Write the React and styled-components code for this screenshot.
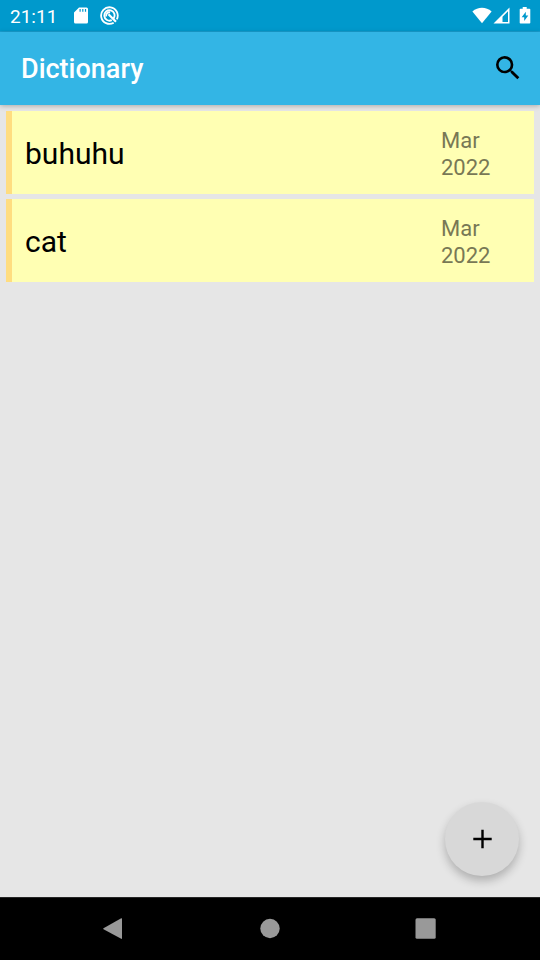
import React from "react";
import styled, { createGlobalStyle } from "styled-components";

const GlobalStyle = createGlobalStyle`
  *, *::before, *::after { box-sizing: border-box; }
  body {
    margin: 0;
    background: #e6e6e6;
    font-family: Roboto, "Noto Sans", sans-serif;
  }
  button {
    border: 0;
    padding: 0;
    background: none;
    color: inherit;
    font: inherit;
    cursor: pointer;
  }
`;

const Screen = styled.div`
  display: flex;
  flex-direction: column;
  min-height: 100vh;
  background: #e6e6e6;
`;

const StatusBar = styled.div`
  display: flex;
  align-items: center;
  justify-content: space-between;
  height: 32px;
  padding: 0 9px 0 10px;
  background: #0099cc;
  border-bottom: 1px solid #189fd1;
  color: #fff;
`;

const StatusGroup = styled.div`
  display: flex;
  align-items: center;
`;

const Clock = styled.time`
  margin-right: 17px;
  padding-top: 1px;
  font-size: 19px;
  line-height: 31px;
`;

const Glyph = styled.svg`
  display: block;
  flex: none;
  width: ${(p) => p.$w}px;
  height: ${(p) => p.$h}px;
  margin-right: ${(p) => p.$gap || 0}px;
  fill: currentColor;
`;

const AppBar = styled.header`
  display: flex;
  align-items: center;
  justify-content: space-between;
  height: 73px;
  padding: 0 16px 2px 21px;
  background: #33b5e5;
  color: #fff;
  box-shadow: 0 1px 5px rgba(0, 0, 0, 0.26);
`;

const Title = styled.h1`
  margin: 0;
  padding-top: 2px;
  font-size: 27px;
  font-weight: 500;
  line-height: 32px;
`;

const IconButton = styled.button`
  display: grid;
  place-items: center;
  color: #000;
`;

const Content = styled.main`
  flex: 1;
`;

const WordList = styled.ul`
  display: flex;
  flex-direction: column;
  gap: 5px;
  margin: 0;
  padding: 6px;
  list-style: none;
`;

const WordCard = styled.li`
  display: flex;
  align-items: center;
  justify-content: space-between;
  height: 83px;
  padding: 0 37px 0 13px;
  border-left: 6px solid #ffdd80;
  background: #ffffb3;
`;

const Word = styled.span`
  padding-top: 2px;
  font-size: 30px;
  line-height: 36px;
  color: #000;
`;

const WordDate = styled.time`
  width: 56px;
  padding-top: 3px;
  font-size: 22px;
  line-height: 27px;
  color: #787855;
`;

const BottomArea = styled.div`
  position: sticky;
  bottom: 0;
`;

const AddButton = styled.button`
  display: grid;
  place-items: center;
  width: 74px;
  height: 74px;
  margin: 0 21px 21px auto;
  border-radius: 50%;
  && {
    background: #d8d8d8;
  }
  color: #000;
  box-shadow: 0 5px 10px rgba(0, 0, 0, 0.24);
`;

const NavBar = styled.nav`
  display: flex;
  justify-content: center;
  height: 63px;
  background: #000;
  border-top: 1px solid #262626;
  color: #999;
`;

const NavButton = styled.button`
  display: grid;
  place-items: center;
  flex: 0 1 156px;
`;

const entries = [
  { word: "buhuhu", date: "Mar 2022" },
  { word: "cat", date: "Mar 2022" },
];

export default function App() {
  return (
    <Screen>
      <GlobalStyle />
      <StatusBar>
        <StatusGroup>
          <Clock>21:11</Clock>
          <Glyph $w={14} $h={17} $gap={12} viewBox="0 0 14 17" aria-hidden="true">
            <path
              fillRule="evenodd"
              d="M5 .5h7.500A1.500 1.500 0 0 1 14 2v13a1.500 1.500 0 0 1-1.500 1.500h-11A1.500 1.500 0 0 1 0 15V5.500zM5.500 2v2.800h1.200V2zM8.200 2v2.800h1.200V2zM10.900 2v2.800h1.200V2z"
            />
          </Glyph>
          <Glyph $w={19} $h={19} viewBox="0 0 19 19" aria-hidden="true">
            <g fill="none" stroke="currentColor">
              <path d="M13.700 16.700A8.300 8.300 0 1 1 16.800 13.400" strokeWidth="1.800" />
              <path d="M13.600 12.600A5.200 5.200 0 1 0 11.800 14.100" strokeWidth="1.900" />
              <path d="M8.500 8.300L16 15.800" strokeWidth="2.200" />
              <path d="M6.300 10.500A3.200 3.200 0 0 1 10.200 6.400" strokeWidth="1.800" />
            </g>
          </Glyph>
        </StatusGroup>
        <StatusGroup>
          <Glyph $w={20} $h={17} $gap={1} viewBox="0 0 20 17" aria-hidden="true">
            <path d="M.4 4.400C5.900-.4 14.100-.4 19.600 4.400L10 16.300z" />
          </Glyph>
          <Glyph $w={17} $h={17} $gap={9} viewBox="0 0 17 17" aria-hidden="true">
            <path fillRule="evenodd" d="M16.500.5v16H.5zM15 4.200L9.500 9.700V15H15z" />
          </Glyph>
          <Glyph $w={12} $h={17} viewBox="0 0 12 17" aria-hidden="true">
            <path
              fillRule="evenodd"
              d="M3.700 0h4v1.800H10.500a.8.8 0 0 1 .8.8v13.100a.8.8 0 0 1-.8.8H1.500a.8.8 0 0 1-.8-.8V2.600a.8.8 0 0 1 .8-.8H3.700zM6.800 4.700L2.700 10.300H5.200V14L9.300 8.500H6.800z"
            />
          </Glyph>
        </StatusGroup>
      </StatusBar>
      <AppBar>
        <Title>Dictionary</Title>
        <IconButton type="button" aria-label="Search">
          <Glyph $w={32} $h={32} viewBox="0 0 24 24" aria-hidden="true">
            <path d="M15.500 14h-.79l-.28-.27A6.471 6.471 0 0 0 16 9.500 6.500 6.500 0 1 0 9.500 16c1.610 0 3.090-.59 4.230-1.570l.27.280v.790l5 4.990L20.490 19l-4.990-5zm-6 0C7.010 14 5 11.990 5 9.500S7.010 5 9.500 5 14 7.010 14 9.500 11.990 14 9.500 14z" />
          </Glyph>
        </IconButton>
      </AppBar>
      <Content>
        <WordList>
          {entries.map((entry) => (
            <WordCard key={entry.word}>
              <Word>{entry.word}</Word>
              <WordDate dateTime="2022-03">{entry.date}</WordDate>
            </WordCard>
          ))}
        </WordList>
      </Content>
      <BottomArea>
        <AddButton type="button" aria-label="Add word">
          <Glyph $w={32} $h={32} viewBox="0 0 32 32" aria-hidden="true">
            <path d="M15.300 6.800h2.400v8h8v2.400h-8v8h-2.400v-8h-8v-2.400h8z" />
          </Glyph>
        </AddButton>
        <NavBar aria-label="System">
          <NavButton type="button" aria-label="Back">
            <Glyph $w={24} $h={24} viewBox="0 0 24 24" aria-hidden="true">
              <path d="M1.500 11.200L19.200 1.300Q20 1 20 1.800V21.200Q20 22.200 19.200 21.800L1.500 12.200Q.8 11.700 1.500 11.200z" />
            </Glyph>
          </NavButton>
          <NavButton type="button" aria-label="Home">
            <Glyph $w={24} $h={24} viewBox="0 0 24 24" aria-hidden="true">
              <circle cx="12" cy="11.500" r="9.700" />
            </Glyph>
          </NavButton>
          <NavButton type="button" aria-label="Recent apps">
            <Glyph $w={24} $h={24} viewBox="0 0 24 24" aria-hidden="true">
              <rect x="1.500" y="1.300" width="20.200" height="20.400" rx="1.500" />
            </Glyph>
          </NavButton>
        </NavBar>
      </BottomArea>
    </Screen>
  );
}
